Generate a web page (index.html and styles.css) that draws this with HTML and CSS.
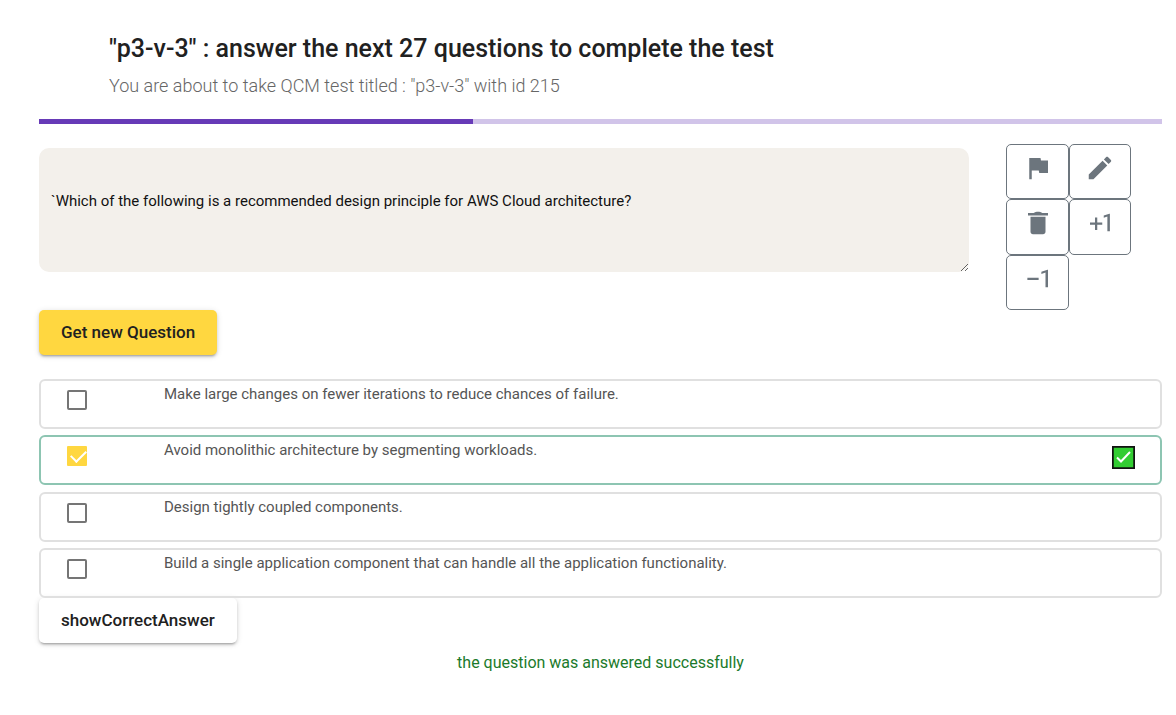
FILE: index.html
```html
<!DOCTYPE html>
<html lang="en">
<head>
<meta charset="utf-8">
<meta name="viewport" content="width=device-width, initial-scale=1">
<title>QCM test</title>
<link rel="stylesheet" href="styles.css">
</head>
<body>
<main class="quiz">
  <header class="quiz-header">
    <h1 class="title">"p3-v-3" : answer the next 27 questions to complete the test</h1>
    <p class="subtitle">You are about to take QCM test titled : "p3-v-3" with id 215</p>
  </header>

  <div class="progress" role="progressbar" aria-label="Test progress" aria-valuemin="0" aria-valuemax="44" aria-valuenow="17">
    <div class="progress-bar" style="width: 38.64%"></div>
  </div>

  <section class="question-row">
    <textarea class="question" aria-label="Question">`Which of the following is a recommended design principle for AWS Cloud architecture?</textarea>
    <div class="actions">
      <button class="action" type="button" aria-label="Flag question">
        <svg class="icon" viewBox="0 0 24 24"><path d="M14.4 6L14 4H5v17h2v-7h5.600l.4 2h7V6z"/></svg>
      </button>
      <button class="action" type="button" aria-label="Edit question">
        <svg class="icon" viewBox="0 0 24 24"><path d="M3 17.250V21h3.750L17.810 9.940l-3.750-3.750L3 17.250zM20.710 7.040c.39-.39.39-1.020 0-1.410l-2.340-2.340c-.39-.39-1.020-.39-1.410 0l-1.830 1.830 3.750 3.750 1.830-1.830z"/></svg>
      </button>
      <button class="action" type="button" aria-label="Delete question">
        <svg class="icon" viewBox="0 0 24 24"><path d="M6 19c0 1.100.9 2 2 2h8c1.100 0 2-.9 2-2V7H6v12zM20 4h-4.500C14.500 3.300 13.300 3 12 3s-2.500.3-3.500 1H4v2h16z"/></svg>
      </button>
      <button class="action" type="button" aria-label="Plus one">
        <svg class="icon" viewBox="0 0 24 24"><path d="M9.800 7.500H8v4H4v1.800h4v4.200h1.800v-4.200h4v-1.800h-4zM15 6v1.800l2.900-1V18.500h2V4.500h-.4z"/></svg>
      </button>
      <button class="action" type="button" aria-label="Minus one">
        <svg class="icon" viewBox="0 0 24 24"><path d="M3.500 10.900v1.900h9v-1.900zM20 18.500h-2V6.800l-3.300 1.100V6.200l4.900-1.700h.4z"/></svg>
      </button>
    </div>
  </section>

  <button class="button button-accent" type="button">Get new Question</button>

  <div class="options">
    <div class="option">
      <input class="check" type="checkbox" id="option-1">
      <label class="option-text" for="option-1">Make large changes on fewer iterations to reduce chances of failure.</label>
    </div>
    <div class="option option-correct">
      <input class="check" type="checkbox" id="option-2" checked>
      <label class="option-text" for="option-2">Avoid monolithic architecture by segmenting workloads.</label>
      <svg class="badge" viewBox="0 0 23 23" role="img" aria-label="Correct"><path class="badge-box" d="M.75.75h21.500v21.500H.75z"/><path class="badge-tick" d="M5 11.500l4 4 9-9.500"/></svg>
    </div>
    <div class="option">
      <input class="check" type="checkbox" id="option-3">
      <label class="option-text" for="option-3">Design tightly coupled components.</label>
    </div>
    <div class="option">
      <input class="check" type="checkbox" id="option-4">
      <label class="option-text" for="option-4">Build a single application component that can handle all the application functionality.</label>
    </div>
  </div>

  <button class="button" type="button">showCorrectAnswer</button>
  <p class="status" role="status">the question was answered successfully</p>
</main>
</body>
</html>
```
FILE: styles.css
```css
* {
  box-sizing: border-box;
}

body {
  margin: 0;
  background: #fff;
  color: #212121;
  font-family: Roboto, "Liberation Sans", sans-serif;
}

.quiz {
  padding: 33px 14px 32px 39px;
}

.quiz-header {
  padding: 0 70px;
}

.title {
  margin: 0;
  font-size: 25px;
  line-height: 32px;
  font-weight: 500;
}

.subtitle {
  margin: 7px 0 0;
  font-size: 18px;
  line-height: 28px;
  font-weight: 300;
  color: #666;
}

.progress {
  height: 5px;
  margin-top: 19px;
  background: #d1c4e9;
}

.progress-bar {
  height: 100%;
  background: #673ab7;
}

.question-row {
  display: flex;
  align-items: flex-start;
  gap: 37px;
  margin-top: 20px;
  padding-right: 31px;
}

.question {
  display: block;
  flex: 1;
  min-width: 0;
  height: 124px;
  margin: 4px 0 0;
  padding: 43px 12px 12px;
  border: 0;
  border-radius: 10px;
  background: #f3f0eb;
  color: #111;
  font: 400 15px/20px Roboto, "Liberation Sans", sans-serif;
  resize: vertical;
}

.actions {
  display: grid;
  grid-template-columns: 63px 62px;
  grid-auto-rows: 1fr;
  height: 166px;
}

.action {
  display: flex;
  justify-content: center;
  padding: 8px 0 0;
  border: 1px solid #6c757d;
  border-radius: 5px;
  background: #fff;
  color: #6c757d;
}

.icon {
  width: 30px;
  height: 30px;
  fill: currentColor;
}

.button {
  display: block;
  height: 45px;
  padding: 0 22px;
  border: 0;
  border-radius: 5px;
  background: #fff;
  color: #212121;
  font: 500 17px/45px Roboto, "Liberation Sans", sans-serif;
  box-shadow: 0 3px 2px -2px rgba(0, 0, 0, .2), 0 2px 3px rgba(0, 0, 0, .14), 0 1px 6px rgba(0, 0, 0, .12);
}

.button-accent {
  background: #ffd740;
}

.options {
  display: grid;
  align-content: space-between;
  min-height: 219px;
  margin-top: 24px;
}

.option {
  display: flex;
  align-items: flex-start;
  min-height: 50px;
  padding: 0 25px;
  border: 2px solid #e0e0e0;
  border-radius: 6px;
}

.option-correct {
  border-color: #8dc5b2;
}

.option-text {
  flex: 1;
  padding-top: 3px;
  font-size: 15px;
  line-height: 20px;
  color: #555;
}

.check {
  appearance: none;
  width: 20px;
  height: 20px;
  margin: 9px 77px 0 1px;
  border: 2px solid #757575;
  border-radius: 2px;
}

.check:checked {
  border: 0;
  border-radius: 1px;
  background: #ffd740;
}

.check:checked::before {
  content: "";
  display: block;
  width: 7px;
  height: 13px;
  margin: 1px 0 0 7px;
  border: solid #fff;
  border-width: 0 2px 2px 0;
  transform: rotate(45deg);
}

.badge {
  width: 23px;
  height: 23px;
  margin-top: 9px;
}

.badge-box {
  fill: #32cd32;
  stroke: #111;
  stroke-width: 2;
}

.badge-tick {
  fill: none;
  stroke: #fff;
  stroke-width: 2;
}

.status {
  margin: 8px 0 0;
  text-align: center;
  font-size: 16px;
  line-height: 24px;
  color: #1b7a2b;
}
```
